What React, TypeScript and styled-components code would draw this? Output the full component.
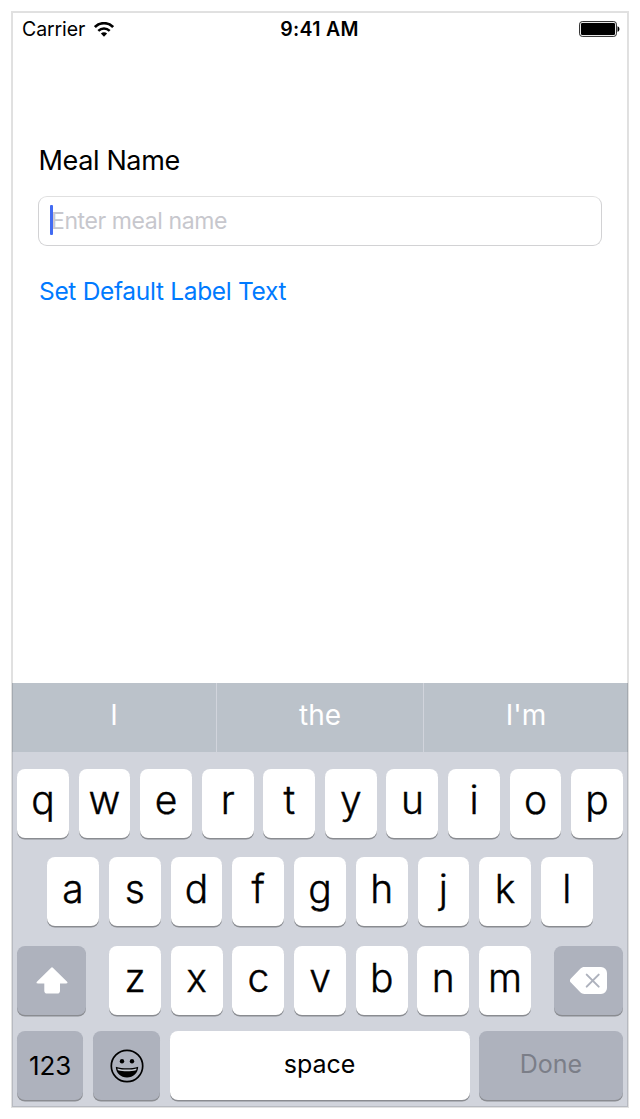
import React from 'react';
import styled, { createGlobalStyle } from 'styled-components';

const GlobalStyle = createGlobalStyle`
  *, *::before, *::after { box-sizing: border-box; }
  body {
    margin: 0;
    background: #fff;
    color: #000;
    font-family: Inter, 'Liberation Sans', sans-serif;
  }
  button { font-family: inherit; }
`;

const Page = styled.div`
  height: 1119px;
  padding: 11px;
`;

const Phone = styled.main`
  position: relative;
  display: flex;
  flex-direction: column;
  width: 618px;
  height: 1097px;
  border: 1px solid #e1e1e1;
  background: #fff;

  &::after {
    content: '';
    position: absolute;
    inset: 0;
    border: 1px solid rgba(0, 0, 0, 0.12);
    pointer-events: none;
  }
`;

const StatusBar = styled.header`
  display: grid;
  grid-template-columns: 1fr auto 1fr;
  align-items: center;
  height: 34px;
  padding: 0 8px 0 10px;
`;

const Carrier = styled.div`
  display: flex;
  align-items: center;
  gap: 9px;
  font-size: 19.5px;
  line-height: 24px;
  letter-spacing: -0.1px;
`;

const Clock = styled.time`
  margin-right: 3px;
  font-size: 19.5px;
  font-weight: 600;
  line-height: 24px;
  letter-spacing: 0.3px;
`;

const BatterySlot = styled.div`
  display: flex;
  justify-content: flex-end;
`;

const Form = styled.section`
  display: flex;
  flex: 1;
  flex-direction: column;
  align-items: flex-start;
  padding: 98px 26px 0;
`;

const Label = styled.h1`
  margin: 0 0 18px 0.6px;
  font-size: 27px;
  font-weight: 400;
  line-height: 34px;
  letter-spacing: -0.38px;
  white-space: nowrap;
`;

const Field = styled.div`
  display: flex;
  align-items: center;
  width: 564px;
  height: 50px;
  padding-left: 11px;
  border: 1px solid #d2d2d4;
  border-top-color: #e0e0e0;
  border-radius: 9px;
`;

const Caret = styled.span`
  width: 3px;
  height: 30px;
  margin: -3px -2px 0 0;
  border-radius: 1px;
  background: #426bf2;
  z-index: 1;
`;

const Placeholder = styled.span`
  color: #c7c7cd;
  font-size: 23px;
  line-height: 30px;
  letter-spacing: -0.4px;
  white-space: nowrap;
`;

const LinkButton = styled.button`
  margin: 29px 0 0 1px;
  padding: 0;
  border: 0;
  background: none;
  color: #007aff;
  font-size: 24.5px;
  line-height: 32px;
  letter-spacing: -0.32px;
  white-space: nowrap;
`;

const Keyboard = styled.section`
  flex: none;
  height: 424px;
  background: #d1d4dc;
`;

const Suggestions = styled.div`
  display: grid;
  grid-template-columns: 204px 206px 1fr;
  gap: 1px;
  height: 69px;
`;

const Suggestion = styled.div`
  display: flex;
  align-items: center;
  justify-content: center;
  padding-bottom: 5px;
  background: #bbc2ca;
  color: #fff;
  font-size: 28px;
  line-height: 34px;
`;

const Rows = styled.div`
  display: flex;
  flex-direction: column;
  padding: 17px 5px 0;
`;

const Row = styled.div<{ $inset?: number; $after?: number }>`
  display: flex;
  justify-content: space-between;
  height: 69px;
  padding: 0 ${(p) => p.$inset ?? 0}px;
  margin-bottom: ${(p) => p.$after ?? 0}px;
`;

const LetterGroup = styled.div`
  display: flex;
  gap: 9.85px;
`;

const Key = styled.button<{ $width?: number; $size?: number; $muted?: boolean; $lift?: number }>`
  display: flex;
  flex: none;
  align-items: center;
  justify-content: center;
  width: ${(p) => p.$width ?? 51.8}px;
  height: 69px;
  padding: 0 0 ${(p) => p.$lift ?? 7}px;
  border: 0;
  border-radius: 8px;
  background: ${(p) => (p.$muted ? '#aeb2bd' : '#fff')};
  box-shadow: 0 1.6px 0 #8a8c91;
  color: #000;
  font-size: ${(p) => p.$size ?? 39}px;
  font-weight: ${(p) => (p.$size ? 400 : 300)};
  -webkit-text-stroke: ${(p) => (p.$size ? 0 : 0.4)}px currentColor;
  line-height: 48px;
`;

const Disabled = styled.span`
  color: #7b7e88;
`;

const WifiIcon = () => (
  <svg width="20" height="15" viewBox="0 0 20 15" fill="none" stroke="#000">
    <path d="M.9 5.1C6-.1 14-.1 19.1 5.1" strokeWidth="2.7" />
    <path d="M4.3 8.8c3.3-3.2 8.1-3.2 11.4 0" strokeWidth="2.5" />
    <path d="M6.9 11.5c1.8-1.8 4.4-1.8 6.2 0L10 14.7z" fill="#000" stroke="none" />
  </svg>
);

const BatteryIcon = () => (
  <svg width="41" height="16" viewBox="0 0 41 16">
    <rect x=".6" y=".6" width="36.8" height="14.8" rx="2.6" fill="#fff" stroke="#222" strokeWidth="1" />
    <rect x="2" y="2" width="34" height="12" rx="1.2" />
    <path d="M38.5 5.2c2.6.7 2.6 4.9 0 5.6z" />
  </svg>
);

const ShiftIcon = () => (
  <svg width="32" height="27" viewBox="0 0 32 27" fill="#fff">
    <path d="M14.9.9a1.5 1.5 0 0 1 2.2 0l14 13.8c.8.8.4 1.8-.8 1.8H24v7.2a2.8 2.8 0 0 1-2.8 2.8H11.1a2.8 2.8 0 0 1-2.8-2.8v-7.2H1.7c-1.2 0-1.6-1-.8-1.8z" />
  </svg>
);

const BackspaceIcon = () => (
  <svg width="37" height="27" viewBox="0 0 37 27">
    <path
      fill="#fff"
      d="M14.3 0H31a6 6 0 0 1 6 6v15a6 6 0 0 1-6 6H14.3c-1.5 0-2.9-.7-4-1.7L.9 15.4a2.6 2.6 0 0 1 0-3.8L10.3 1.7C11.4.6 12.8 0 14.3 0z"
    />
    <path d="m16.7 7.6 12 12m0-12-12 12" stroke="#aeb2bd" strokeWidth="2" strokeLinecap="round" />
  </svg>
);

const EmojiFace = styled.svg`
  margin-left: 1px;
`;

const EmojiIcon = () => (
  <EmojiFace width="34" height="34" viewBox="0 0 34 34">
    <circle cx="17" cy="17" r="15.7" fill="none" stroke="#000" strokeWidth="1.7" />
    <circle cx="12" cy="12.3" r="2.2" />
    <circle cx="22" cy="12.3" r="2.2" />
    <path d="M5.8 17.8c6.7 2 15.7 2 22.4 0C28 24.3 23.2 28.6 17 28.6S6 24.3 5.8 17.8z" />
    <path d="M7.4 19.4c5.9 1.6 13.3 1.6 19.2 0-.1.7-.3 1.300-.6 1.800-5.200 1.500-12.800 1.500-18 0-.3-.5-.5-1.100-.6-1.800z" fill="#c4c8d0" />
  </EmojiFace>
);

const letters = (keys: string, lift?: number) =>
  [...keys].map((k) => (
    <Key key={k} $lift={lift}>
      {k}
    </Key>
  ));

export default function App() {
  return (
    <Page>
      <GlobalStyle />
      <Phone>
        <StatusBar>
          <Carrier>
            Carrier
            <WifiIcon />
          </Carrier>
          <Clock>9:41 AM</Clock>
          <BatterySlot>
            <BatteryIcon />
          </BatterySlot>
        </StatusBar>
        <Form>
          <Label>Meal Name</Label>
          <Field>
            <Caret />
            <Placeholder>Enter meal name</Placeholder>
          </Field>
          <LinkButton>Set Default Label Text</LinkButton>
        </Form>
        <Keyboard>
          <Suggestions>
            <Suggestion>I</Suggestion>
            <Suggestion>the</Suggestion>
            <Suggestion>I'm</Suggestion>
          </Suggestions>
          <Rows>
            <Row $after={19.3}>{letters('qwertyuiop')}</Row>
            <Row $inset={30.2} $after={19.5}>{letters('asdfghjkl', 5.5)}</Row>
            <Row $after={16.5}>
              <Key $muted $width={69} $lift={0}>
                <ShiftIcon />
              </Key>
              <LetterGroup>{letters('zxcvbnm', 5.5)}</LetterGroup>
              <Key $muted $width={69} $lift={0}>
                <BackspaceIcon />
              </Key>
            </Row>
            <Row>
              <Key $muted $width={66.3} $size={26} $lift={0}>123</Key>
              <Key $muted $width={67.7} $lift={0}>
                <EmojiIcon />
              </Key>
              <Key $width={300.2} $size={25} $lift={3}>space</Key>
              <Key $muted $width={144} $size={25} $lift={3}>
                <Disabled>Done</Disabled>
              </Key>
            </Row>
          </Rows>
        </Keyboard>
      </Phone>
    </Page>
  );
}
